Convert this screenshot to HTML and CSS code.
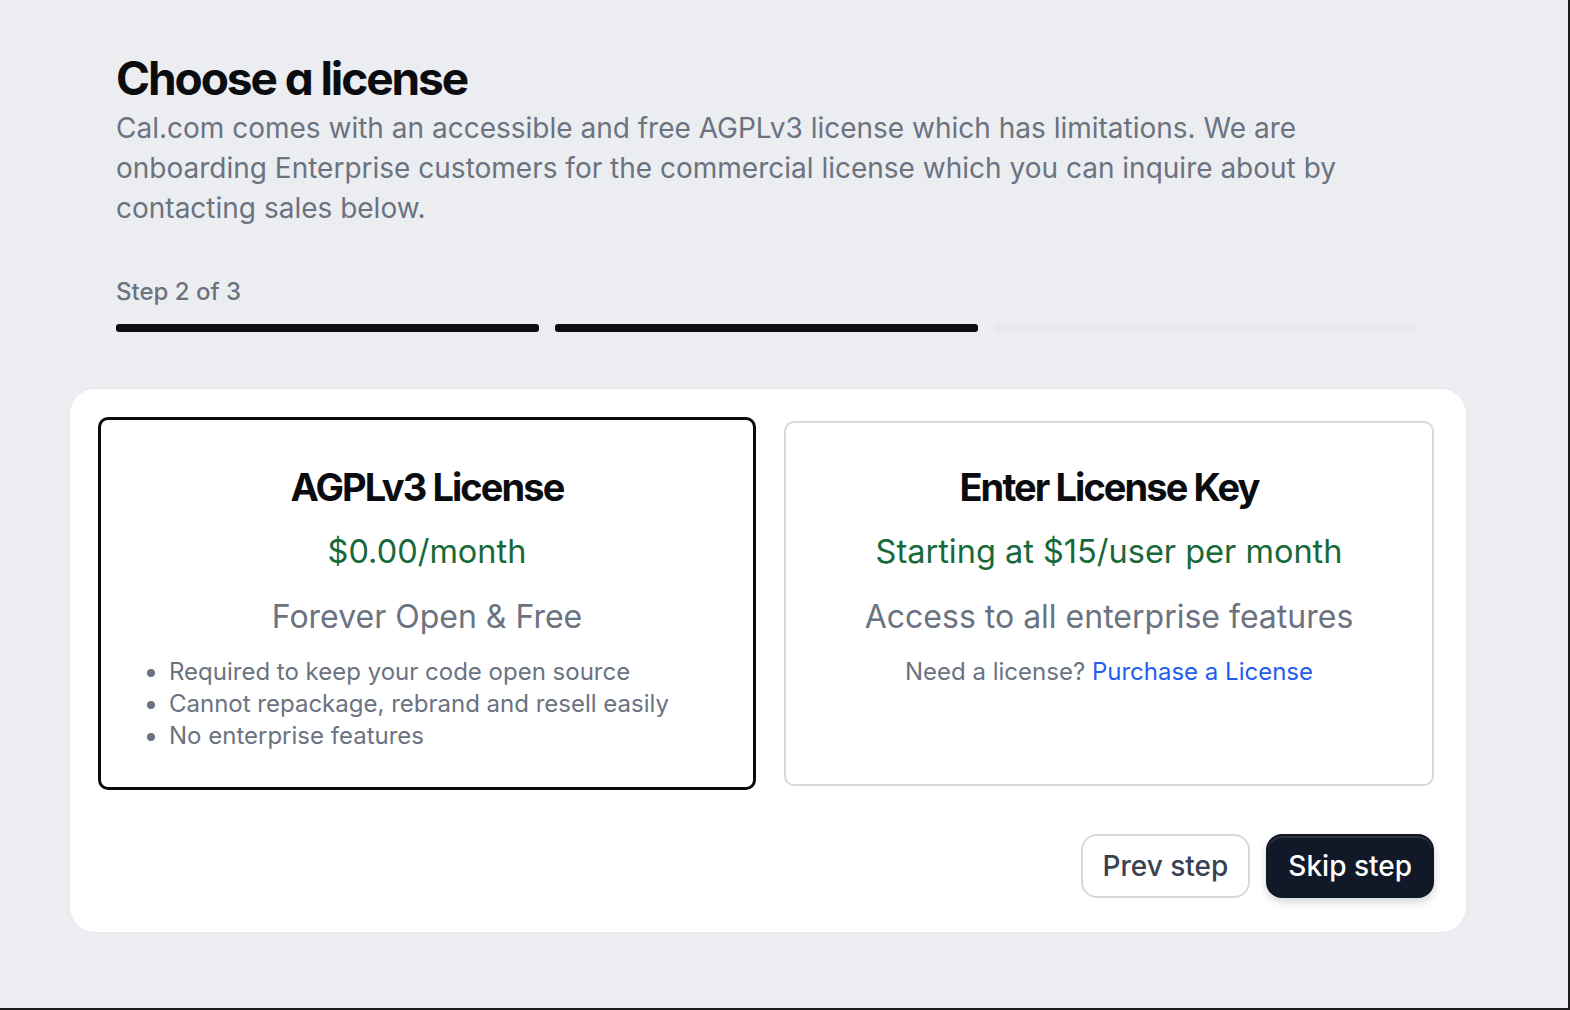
FILE: index.html
```html
<!DOCTYPE html>
<html lang="en">
<head>
<meta charset="utf-8">
<title>Choose a license</title>
<link rel="stylesheet" href="styles.css">
</head>
<body>
<main class="page">
  <header class="intro">
    <h1 class="title">Choose a license</h1>
    <p class="lead">Cal.com comes with an accessible and free AGPLv3 license which has limitations. We are onboarding Enterprise customers for the commercial license which you can inquire about by contacting sales below.</p>
    <div class="step-label">Step 2 of 3</div>
    <div class="progress">
      <span class="progress-seg is-done"></span>
      <span class="progress-seg is-done"></span>
      <span class="progress-seg"></span>
    </div>
  </header>

  <section class="panel">
    <div class="options">
      <div class="option is-selected">
        <h2 class="option-title">AGPLv3 License</h2>
        <div class="option-price">$0.00/month</div>
        <div class="option-tagline">Forever Open &amp; Free</div>
        <ul class="option-list">
          <li>Required to keep your code open source</li>
          <li>Cannot repackage, rebrand and resell easily</li>
          <li>No enterprise features</li>
        </ul>
      </div>
      <div class="option">
        <h2 class="option-title">Enter License Key</h2>
        <div class="option-price">Starting at $15/user per month</div>
        <div class="option-tagline">Access to all enterprise features</div>
        <p class="option-note">Need a license? <a class="link" href="#">Purchase a License</a></p>
      </div>
    </div>
    <div class="actions">
      <button class="btn btn-secondary" type="button">Prev step</button>
      <button class="btn btn-primary" type="button">Skip step</button>
    </div>
  </section>
</main>
</body>
</html>
```

FILE: styles.css
```css
* {
  box-sizing: border-box;
}

html,
body {
  margin: 0;
  padding: 0;
}

body {
  min-height: 100vh;
  background: #ecedf1;
  font-family: Inter, "Noto Sans", "Liberation Sans", sans-serif;
  color: #111827;
  border-right: 2px solid #1c1c1e;
  border-bottom: 2px solid #1c1c1e;
}

.page {
  width: 1398px;
  margin-left: 69px;
  padding-top: 48px;
}

/* ---------- intro ---------- */
.intro {
  padding: 0 50px 0 47px;
}

.title {
  margin: 0;
  font-size: 46px;
  line-height: 60px;
  font-weight: 700;
  letter-spacing: -0.045em;
  font-feature-settings: "cv11";
  color: #0b0c10;
}

.lead {
  margin: 0;
  font-size: 28px;
  line-height: 40px;
  color: #6b7280;
}

.step-label {
  margin-top: 49px;
  font-size: 24px;
  line-height: 30px;
  color: #6b7280;
  font-weight: 500;
}

.progress {
  display: flex;
  gap: 16px;
  margin-top: 17px;
}

.progress-seg {
  flex: 1;
  height: 8px;
  border-radius: 3px;
  background: #e7e8ec;
}

.progress-seg.is-done {
  background: #0b0c10;
}

/* ---------- panel ---------- */
.panel {
  margin-top: 56px;
  background: #ffffff;
  border: 1px solid #e5e7eb;
  border-radius: 26px;
  padding: 32px 32px 34px 32px;
}

.options {
  display: grid;
  grid-template-columns: 1fr 1fr;
  gap: 32px;
}

.option {
  min-height: 365px;
  border: 2px solid #d5d8de;
  border-radius: 10px;
  padding: 39px 24px 30px;
  text-align: center;
}

.option.is-selected {
  border: 3px solid #0b0c10;
  margin: -4px;
  padding: 42px 30px 30px;
}

.option-title {
  margin: 0;
  font-size: 38px;
  line-height: 50px;
  font-weight: 700;
  letter-spacing: -0.05em;
  color: #0b0c10;
}

.option-price {
  margin-top: 20px;
  font-size: 32.5px;
  line-height: 40px;
  color: #17693a;
}

.option-tagline {
  margin-top: 25px;
  font-size: 32px;
  line-height: 40px;
  color: #6b7280;
}

.option-list {
  margin: 19px 0 0;
  padding-left: 38px;
  text-align: left;
  font-size: 24px;
  line-height: 32px;
  color: #6b7280;
}

.option-list li::marker {
  color: #6b7280;
}

.option-note {
  margin: 19px 0 0;
  font-size: 24px;
  line-height: 32px;
  color: #6b7280;
}

.link {
  color: #1f5ef0;
  text-decoration: none;
}

/* ---------- actions ---------- */
.actions {
  display: flex;
  justify-content: flex-end;
  gap: 16px;
  margin-top: 48px;
}

.btn {
  height: 64px;
  padding: 0 20px;
  border-radius: 16px;
  font-family: inherit;
  font-size: 28px;
  font-weight: 500;
  white-space: nowrap;
  cursor: pointer;
}

.btn-secondary {
  background: #ffffff;
  border: 2px solid #d5d8de;
  color: #374151;
}

.btn-primary {
  background: #111827;
  border: 2px solid #111827;
  color: #ffffff;
  box-shadow: 0 4px 8px rgba(17, 24, 39, 0.18), inset 0 2px 0 rgba(255, 255, 255, 0.12);
}
```
